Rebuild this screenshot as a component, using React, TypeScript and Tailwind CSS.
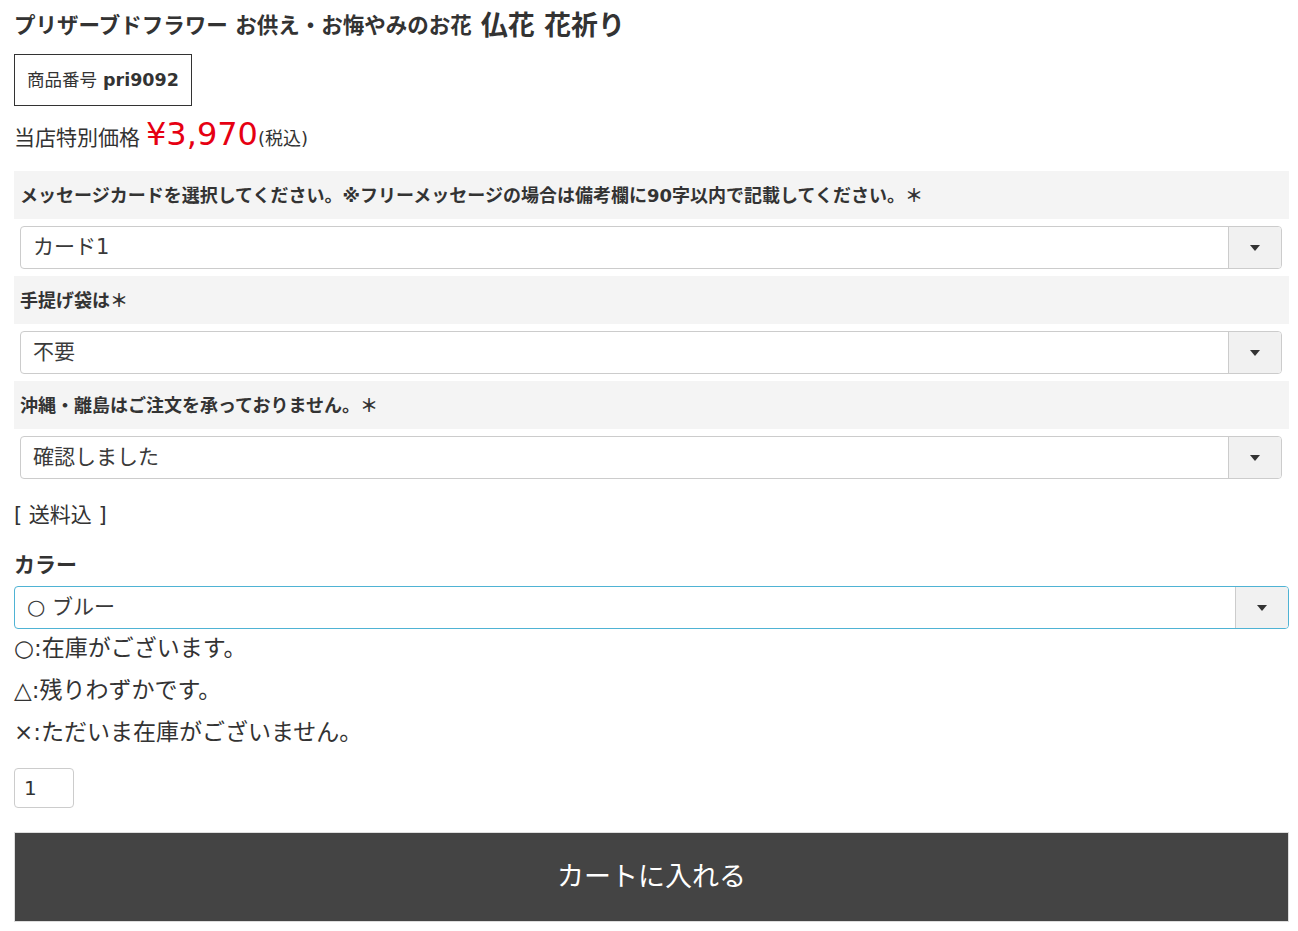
const font = { fontFamily: '"DejaVu Sans", "Noto Sans CJK JP", sans-serif' };

function Caret() {
  return (
    <svg width="10" height="6" viewBox="0 0 10 6" className="block">
      <path d="M0 0 L10 0 L5 6 Z" fill="#333" />
    </svg>
  );
}

function SelectBox({ value, focused = false }: { value: string; focused?: boolean }) {
  return (
    <div
      className={
        'flex h-[43px] rounded-[4px] border bg-white overflow-hidden ' +
        (focused ? 'border-[#4fb3d4]' : 'border-[#cccccc]')
      }
    >
      <div className="flex-1 flex items-center pl-[12px] text-[21px] text-[#3a3a3a]">{value}</div>
      <div className="w-[53px] flex items-center justify-center bg-[#f1f1f1] border-l border-[#cccccc]">
        <Caret />
      </div>
    </div>
  );
}

function OptionField({ label, value }: { label: string; value: string }) {
  return (
    <div>
      <div className="h-[48px] flex items-center bg-[#f4f4f4] px-[6px] text-[18px] font-bold text-[#333]">
        {label}
      </div>
      <div className="py-[7px] pl-[6px] pr-[7px]">
        <SelectBox value={value} />
      </div>
    </div>
  );
}

export default function App() {
  return (
    <div className="bg-white min-h-[931px] text-[#333]" style={font}>
      <div className="ml-[14px] w-[1275px]">
        <div className="h-[48px] pt-[4px] flex items-center font-bold">
          <span className="text-[21.5px]">プリザーブドフラワー お供え・お悔やみのお花</span>
          <span className="text-[27px] ml-[9px]">仏花 花祈り</span>
        </div>

        <div className="mt-[6px] inline-flex items-center h-[52px] px-[12px] border border-[#333] text-[17.5px]">
          商品番号 <span className="font-bold ml-[6px]">pri9092</span>
        </div>

        <div className="mt-[4px] h-[48px] flex items-baseline">
          <span className="text-[21px]">当店特別価格</span>
          <span className="text-[32px] text-[#e60012] ml-[6px] leading-[48px]">¥3,970</span>
          <span className="text-[18px]">(税込)</span>
        </div>

        <div className="mt-[13px]">
          <OptionField
            label="メッセージカードを選択してください。※フリーメッセージの場合は備考欄に90字以内で記載してください。＊"
            value="カード1"
          />
          <OptionField label="手提げ袋は＊" value="不要" />
          <OptionField label="沖縄・離島はご注文を承っておりません。＊" value="確認しました" />
        </div>

        <div className="mt-[14px] leading-[30px] text-[21px]">[ 送料込 ]</div>

        <div className="mt-[20px] leading-[30px] text-[21px] font-bold">カラー</div>

        <div className="mt-[6px]">
          <SelectBox value="○ ブルー" focused />
        </div>

        <div className="-mt-[2px] text-[23px] leading-[42px]">
          <div>○:在庫がございます。</div>
          <div>△:残りわずかです。</div>
          <div>×:ただいま在庫がございません。</div>
        </div>

        <div className="mt-[15px] w-[60px] h-[40px] flex items-center pl-[9px] rounded-[4px] border border-[#cccccc] text-[20px]">
          1
        </div>

        <button className="mt-[24px] w-full h-[90px] bg-[#444444] border border-[#dddddd] text-white text-[27px] flex items-center justify-center">
          カートに入れる
        </button>
      </div>
    </div>
  );
}
